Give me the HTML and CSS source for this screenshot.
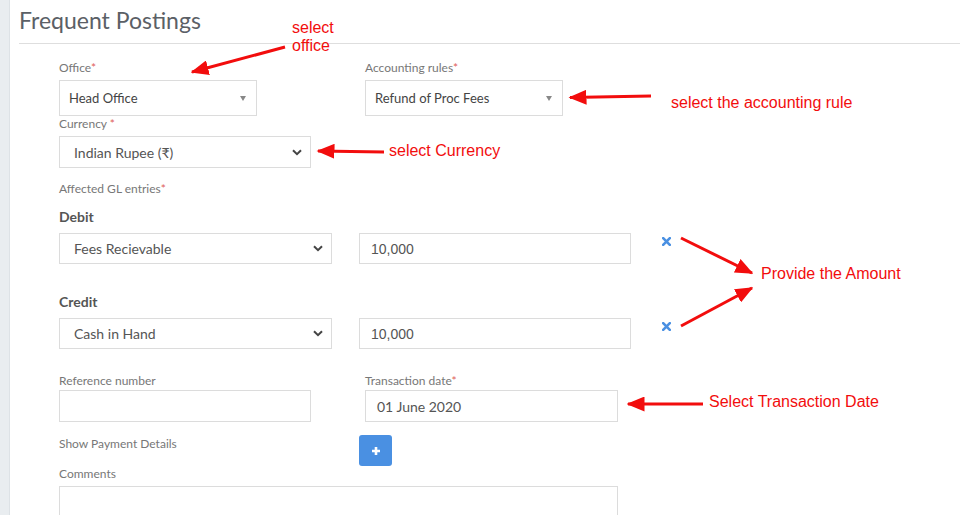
FILE: index.html
```html
<!DOCTYPE html>
<html>
<head>
<meta charset="utf-8">
<link rel="stylesheet" href="styles.css">
</head>
<body>
<div class="page">
  <aside class="strip"></aside>
  <main class="content">
    <h1 class="title">Frequent Postings</h1>
    <form class="form">
      <div class="row row-top">
        <div class="field w198">
          <label class="label">Office<span class="req">*</span></label>
          <div class="box tall"><span>Head Office</span><span class="tri"></span></div>
        </div>
        <div class="field w198 col2">
          <label class="label">Accounting rules<span class="req">*</span></label>
          <div class="box tall"><span>Refund of Proc Fees</span><span class="tri"></span></div>
        </div>
      </div>
      <div class="row row-currency">
        <div class="field w252">
          <label class="label">Currency <span class="req">*</span></label>
          <div class="box sel"><span>Indian Rupee (₹)</span>
            <svg class="chev" width="10" height="7" viewBox="0 0 10 7"><path d="M1 1.2 L5 5.2 L9 1.2" fill="none" stroke="#444" stroke-width="2"/></svg>
          </div>
        </div>
      </div>
      <label class="label gl">Affected GL entries<span class="req">*</span></label>
      <h3 class="entry-head debit-head">Debit</h3>
      <div class="row entry">
        <div class="box sel w273"><span>Fees Recievable</span>
          <svg class="chev" width="10" height="7" viewBox="0 0 10 7"><path d="M1 1.2 L5 5.2 L9 1.2" fill="none" stroke="#444" stroke-width="2"/></svg>
        </div>
        <div class="box amount w272"><span>10,000</span></div>
        <svg class="remove" width="9" height="9" viewBox="0 0 9 9"><path d="M1.2 1.2 L7.8 7.8 M7.8 1.2 L1.2 7.8" stroke="#4a90e2" stroke-width="2.6" stroke-linecap="square"/></svg>
      </div>
      <h3 class="entry-head credit-head">Credit</h3>
      <div class="row entry">
        <div class="box sel w273"><span>Cash in Hand</span>
          <svg class="chev" width="10" height="7" viewBox="0 0 10 7"><path d="M1 1.2 L5 5.2 L9 1.2" fill="none" stroke="#444" stroke-width="2"/></svg>
        </div>
        <div class="box amount w272"><span>10,000</span></div>
        <svg class="remove" width="9" height="9" viewBox="0 0 9 9"><path d="M1.2 1.2 L7.8 7.8 M7.8 1.2 L1.2 7.8" stroke="#4a90e2" stroke-width="2.6" stroke-linecap="square"/></svg>
      </div>
      <div class="row row-ref">
        <div class="field w252">
          <label class="label lb2">Reference number</label>
          <div class="box input"></div>
        </div>
        <div class="field w253 col2b">
          <label class="label lb2">Transaction date<span class="req">*</span></label>
          <div class="box input date"><span>01 June 2020</span></div>
        </div>
      </div>
      <div class="row row-pay">
        <span class="label pay-label">Show Payment Details</span>
        <button type="button" class="plus">
          <svg width="10" height="10" viewBox="0 0 10 10"><path d="M5 1 V9 M1 5 H9" stroke="#fff" stroke-width="2.6"/></svg>
        </button>
      </div>
      <label class="label">Comments</label>
      <div class="box textarea"></div>
    </form>
  </main>
</div>

<svg class="arrows" width="960" height="515" viewBox="0 0 960 515">
  <defs>
    <marker id="head" markerWidth="6" markerHeight="5" refX="5.5" refY="2.5" orient="auto" markerUnits="strokeWidth">
      <path d="M0 0 L6 2.5 L0 5 Z" fill="#f20d0d"/>
    </marker>
  </defs>
  <g stroke="#f20d0d" stroke-width="3" fill="none" marker-end="url(#head)">
    <line x1="285" y1="47" x2="192" y2="72"/>
    <line x1="651" y1="96" x2="570" y2="97.5"/>
    <line x1="384" y1="152" x2="318" y2="151"/>
    <line x1="681" y1="238" x2="752" y2="273"/>
    <line x1="681" y1="326" x2="752" y2="288"/>
    <line x1="703" y1="404" x2="628" y2="404"/>
  </g>
</svg>
<div class="note note-office">select<br>office</div>
<div class="note note-rule">select the accounting rule</div>
<div class="note note-currency">select Currency</div>
<div class="note note-amount">Provide the Amount</div>
<div class="note note-date">Select Transaction Date</div>
</body>
</html>
```

FILE: styles.css
```css
* { box-sizing: border-box; }
html, body { margin: 0; padding: 0; background: #fff; }
body {
  width: 960px;
  height: 515px;
  overflow: hidden;
  position: relative;
  font-family: Lato, "Noto Sans", sans-serif;
  color: #555;
}
.page { display: flex; height: 515px; }
.strip {
  width: 10px;
  flex: none;
  background: #e9edf0;
  border-right: 1px solid #dde2e6;
}
.content { flex: 1; padding-left: 9px; }
.title {
  margin: 0;
  padding: 6px 0 9px 0;
  font-size: 23px;
  line-height: 28px;
  font-weight: 400;
  color: #5b6066;
  border-bottom: 1px solid #dedede;
}
.form { padding-left: 40px; display: flex; flex-direction: column; align-items: flex-start; }
.row { display: flex; align-items: flex-start; }
.field { display: flex; flex-direction: column; }
.w198 { width: 198px; }
.w252 { width: 252px; }
.w253 { width: 253px; }
.w273 { width: 273px; }
.w272 { width: 272px; }
.col2 { margin-left: 108px; }
.col2b { margin-left: 54px; }
.row-top { margin-top: 17px; }
.row-currency { margin-top: 1px; }
.label {
  display: block;
  font-size: 12px;
  line-height: 14px;
  color: #777;
  margin-bottom: 5px;
}
.lb2 { margin-bottom: 2px; }
.req { color: #e0605a; }
.gl { margin-top: 14px; }
.entry-head {
  margin: 0;
  font-size: 14px;
  line-height: 18px;
  font-weight: 700;
  color: #555;
}
.debit-head { margin-top: 7px; margin-bottom: 7px; }
.credit-head { margin-top: 29px; margin-bottom: 7px; }
.box {
  border: 1px solid #dcdcdc;
  background: #fff;
  display: flex;
  align-items: center;
  font-size: 14px;
  color: #555;
}
.tall { height: 36px; padding: 0 10px 0 9px; justify-content: space-between; font-size: 13px; color: #444; }
.tri {
  width: 0; height: 0;
  border-left: 3.5px solid transparent;
  border-right: 3.5px solid transparent;
  border-top: 5px solid #888;
}
.sel { height: 32px; padding: 0 8px 0 14px; justify-content: space-between; }
.entry .sel { height: 31px; }
.entry { align-items: flex-start; }
.amount { height: 31px; margin-left: 27px; padding-left: 11px; font-family: "Liberation Sans", Arial, sans-serif; font-size: 14px; }
.remove { margin-left: 31px; margin-top: 4px; }
.row-ref { margin-top: 25px; }
.input { height: 32px; }
.date { padding-left: 11px; }
.row-pay { margin-top: 13px; height: 32px; }
.pay-label { width: 300px; margin: 2px 0 0 0; }
.plus {
  width: 33px;
  height: 31px;
  border: none;
  border-radius: 3px;
  background: #4a90e2;
  display: flex;
  align-items: center;
  justify-content: center;
  padding: 0;
}
.textarea { width: 559px; height: 60px; margin-top: 0; }

.arrows { position: absolute; left: 0; top: 0; pointer-events: none; }
.note {
  position: absolute;
  font-family: "Liberation Sans", Arial, sans-serif;
  font-size: 16px;
  line-height: 18px;
  color: #f20d0d;
}
.note-office { left: 292px; top: 19px; }
.note-rule { left: 671px; top: 94px; }
.note-currency { left: 389px; top: 142px; }
.note-amount { left: 761px; top: 265px; }
.note-date { left: 709px; top: 393px; }
```
